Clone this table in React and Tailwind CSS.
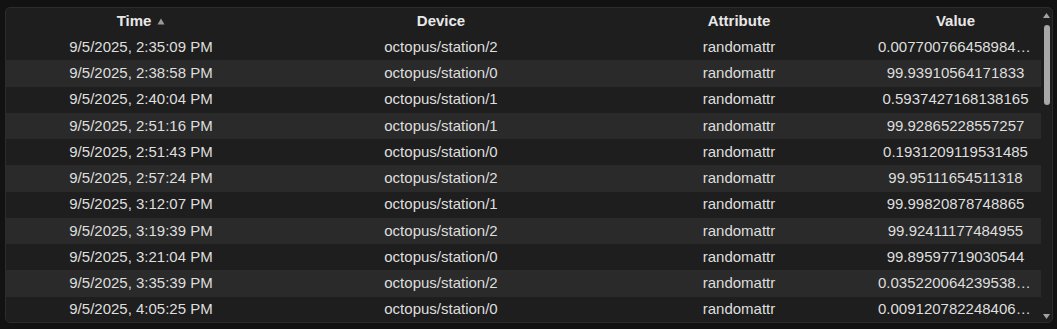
import React from "react";

const rows = [
  ["9/5/2025, 2:35:09 PM", "octopus/station/2", "randomattr", "0.007700766458984312"],
  ["9/5/2025, 2:38:58 PM", "octopus/station/0", "randomattr", "99.93910564171833"],
  ["9/5/2025, 2:40:04 PM", "octopus/station/1", "randomattr", "0.5937427168138165"],
  ["9/5/2025, 2:51:16 PM", "octopus/station/1", "randomattr", "99.92865228557257"],
  ["9/5/2025, 2:51:43 PM", "octopus/station/0", "randomattr", "0.1931209119531485"],
  ["9/5/2025, 2:57:24 PM", "octopus/station/2", "randomattr", "99.95111654511318"],
  ["9/5/2025, 3:12:07 PM", "octopus/station/1", "randomattr", "99.99820878748865"],
  ["9/5/2025, 3:19:39 PM", "octopus/station/2", "randomattr", "99.92411177484955"],
  ["9/5/2025, 3:21:04 PM", "octopus/station/0", "randomattr", "99.89597719030544"],
  ["9/5/2025, 3:35:39 PM", "octopus/station/2", "randomattr", "0.035220064239538215"],
  ["9/5/2025, 4:05:25 PM", "octopus/station/0", "randomattr", "0.009120782248406127"],
];

function Cells({ cells }) {
  return (
    <>
      <div className="w-[270px] shrink-0 px-2 text-center truncate">{cells[0]}</div>
      <div className="w-[330px] shrink-0 px-2 text-center truncate">{cells[1]}</div>
      <div className="w-[266px] shrink-0 px-2 text-center truncate">{cells[2]}</div>
      <div className="w-[169px] shrink-0 pl-[6px] pr-[8px] text-center truncate">{cells[3]}</div>
    </>
  );
}

export default function App() {
  return (
    <div
      className="w-[1057px] h-[329px] bg-[#121212] pl-[5px] pr-[4px] pt-[7px] pb-[6px]"
      style={{ fontFamily: '"Liberation Sans", Arial, sans-serif' }}
    >
      <div className="h-full flex border border-[#2c2c2c] rounded-[5px] bg-[#1e1e1e] overflow-hidden text-[15px] text-[#dedede]">
        <div className="flex-1 flex flex-col min-w-0">
          <div className="h-[26px] shrink-0 flex items-center font-bold text-[#e8e8e8]">
            <div className="w-[270px] shrink-0 px-2 flex items-center justify-center gap-[6px]">
              <span>Time</span>
              <svg width="8" height="7" viewBox="0 0 8 7" className="mt-[1px]">
                <path d="M4 0.5 L7.5 6.5 L0.5 6.5 Z" fill="#9a9a9a" />
              </svg>
            </div>
            <div className="w-[330px] shrink-0 px-2 text-center">Device</div>
            <div className="w-[266px] shrink-0 px-2 text-center">Attribute</div>
            <div className="w-[169px] shrink-0 pl-[6px] pr-[8px] text-center">Value</div>
          </div>
          {rows.map((r, i) => (
            <div
              key={i}
              className={
                "h-[26.25px] shrink-0 flex items-center " +
                (i % 2 === 1 ? "bg-[#2a2a2a]" : "bg-[#1e1e1e]")
              }
            >
              <Cells cells={r} />
            </div>
          ))}
        </div>
        <div className="w-[11px] shrink-0 flex flex-col items-center pt-[5px] pb-[3px]">
          <svg width="7" height="5" viewBox="0 0 7 5">
            <path d="M3.5 0 L7 5 L0 5 Z" fill="#a3a3a3" />
          </svg>
          <div className="mt-[7px] w-[6px] h-[80px] rounded-full bg-[#a8a8a8]" />
          <div className="flex-1" />
          <svg width="7" height="5" viewBox="0 0 7 5">
            <path d="M0 0 L7 0 L3.5 5 Z" fill="#a3a3a3" />
          </svg>
        </div>
      </div>
    </div>
  );
}
